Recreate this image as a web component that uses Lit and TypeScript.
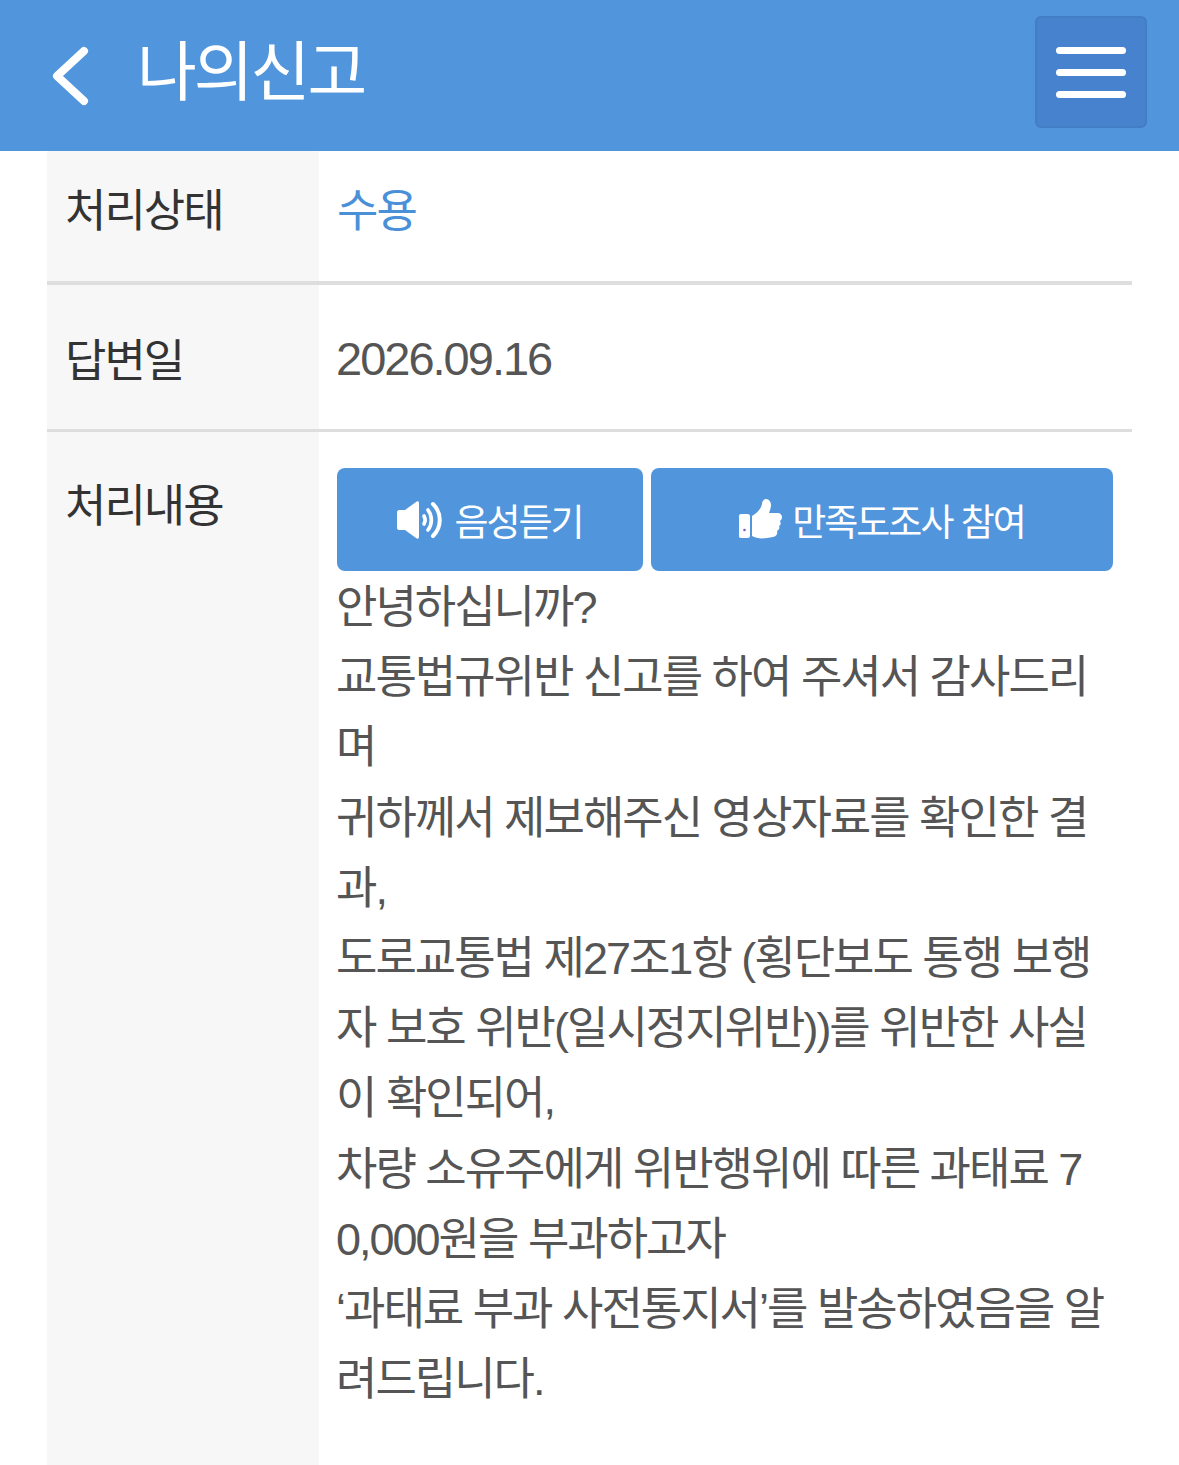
import { LitElement, html, css } from "lit";
import { customElement } from "lit/decorators.js";

const ANSWER = [
  "안녕하십니까?",
  "교통법규위반 신고를 하여 주셔서 감사드리",
  "며",
  "귀하께서 제보해주신 영상자료를 확인한 결",
  "과,",
  "도로교통법 제27조1항 (횡단보도 통행 보행",
  "자 보호 위반(일시정지위반))를 위반한 사실",
  "이 확인되어,",
  "차량 소유주에게 위반행위에 따른 과태료 7",
  "0,000원을 부과하고자",
  "‘과태료 부과 사전통지서’를 발송하였음을 알",
  "려드립니다.",
];

@customElement("app-root")
export class AppRoot extends LitElement {
  static styles = css`
    :host {
      display: flex;
      flex-direction: column;
      height: 1465px;
      overflow: hidden;
      background: #fff;
      color: #555;
      font-family: "Liberation Sans", "Noto Sans CJK KR", sans-serif;
      font-size: 45px;
      letter-spacing: -2px;
    }
    .top {
      flex: none;
      height: 151px;
      box-sizing: border-box;
      background: #5195dc;
      display: flex;
      align-items: center;
      padding: 0 32px 0 52px;
      color: #fff;
    }
    .back {
      display: block;
      flex: none;
      width: 38px;
      height: 60px;
    }
    .top h1 {
      flex: 1;
      margin: 0 0 18px 47px;
      font-size: 65px;
      font-weight: 400;
      letter-spacing: -3px;
    }
    .menu {
      width: 112px;
      height: 112px;
      box-sizing: border-box;
      margin-bottom: 7px;
      background: #4682cd;
      border: 2px solid #437dc6;
      border-radius: 6px;
      display: flex;
      flex-direction: column;
      justify-content: center;
      align-items: center;
      gap: 15px;
    }
    .menu i {
      display: block;
      width: 70px;
      height: 7px;
      border-radius: 4px;
      background: #fff;
    }
    .table {
      flex: 1;
      margin: 0 47px;
      display: flex;
      flex-direction: column;
    }
    .row {
      display: grid;
      grid-template-columns: 272px 1fr;
    }
    .row.status {
      height: 134px;
      border-bottom: 4px solid #dedede;
      box-sizing: border-box;
    }
    .row.date {
      height: 147px;
      border-bottom: 3px solid #dedede;
      box-sizing: border-box;
    }
    .row.answer {
      flex: 1;
    }
    .label {
      background: #f7f7f7;
      color: #333;
      padding-left: 18px;
      display: flex;
      align-items: center;
    }
    .status .label,
    .status .value {
      padding-bottom: 18px;
    }
    .answer .label {
      align-items: flex-start;
      padding-top: 38px;
    }
    .value {
      padding-left: 18px;
      display: flex;
      align-items: center;
    }
    .accepted {
      color: #4a90d9;
    }
    .day {
      margin-left: -1px;
      font-size: 47px;
      padding-top: 2px;
    }
    .answer .value {
      display: block;
      padding-top: 36px;
    }
    .actions {
      display: flex;
      gap: 8px;
    }
    .btn {
      height: 103px;
      border-radius: 8px;
      background: #5195dc;
      color: #fff;
      font-size: 37px;
      display: flex;
      align-items: center;
      justify-content: center;
      gap: 10px;
    }
    .btn.voice {
      width: 306px;
    }
    .btn.survey {
      width: 462px;
    }
    .btn svg {
      display: block;
      flex: none;
    }
    .text {
      margin: 2px 0 0 -1px;
      line-height: 70.2px;
      white-space: nowrap;
    }
  `;

  render() {
    return html`
      <header class="top">
        <svg class="back" viewBox="0 0 38 60" fill="none" stroke="#fff" stroke-width="8" stroke-linecap="round" stroke-linejoin="round">
          <path d="M32 5 5 30l27 25" />
        </svg>
        <h1>나의신고</h1>
        <div class="menu"><i></i><i></i><i></i></div>
      </header>
      <section class="table">
        <div class="row status">
          <div class="label">처리상태</div>
          <div class="value accepted">수용</div>
        </div>
        <div class="row date">
          <div class="label">답변일</div>
          <div class="value"><span class="day">2026.09.16</span></div>
        </div>
        <div class="row answer">
          <div class="label">처리내용</div>
          <div class="value">
            <div class="actions">
              <div class="btn voice">
                <svg width="47" height="38" viewBox="0 0 47 38" fill="#fff">
                  <path d="M0 11c0-1 1-2 2-2h6L19 1c1-1 3-1 3 1v34c0 2-2 2-3 1L8 29H2c-1 0-2-1-2-2z" />
                  <g fill="none" stroke="#fff" stroke-linecap="round">
                    <path stroke-width="3.600" d="M27 15c1.500 2.500 1.500 5.500 0 8" />
                    <path stroke-width="3.600" d="M31 9c4.500 6 4.500 14 0 20" />
                    <path stroke-width="4" d="M36 3c9 9 9 23 0 32" />
                  </g>
                </svg>
                <span>음성듣기</span>
              </div>
              <div class="btn survey">
                <svg width="43" height="41" viewBox="0 0 43 41" fill="#fff">
                  <path d="M0 17c0-1 .5-2 2-2h7c1 0 2 1 2 2v20c0 1-1 2-2 2H2c-1.500 0-2-1-2-2z" />
                  <circle cx="5.500" cy="31" r="1.300" fill="#7a5fc0" />
                  <path d="M13 17c5-3 9-7 10-12 0-3 2-5 4-5 3 0 5 3 5 6 0 3-1 5-2 8h9c2 0 4 2 4 4 0 2-1 3-2 4 1 2 1 4-1 5 1 2 0 4-2 5 1 3-1 6-4 6-9 2-16 2-21-1z" />
                </svg>
                <span>만족도조사 참여</span>
              </div>
            </div>
            <div class="text">
              ${ANSWER.map((line) => html`<div>${line}</div>`)}
            </div>
          </div>
        </div>
      </section>
    `;
  }
}
